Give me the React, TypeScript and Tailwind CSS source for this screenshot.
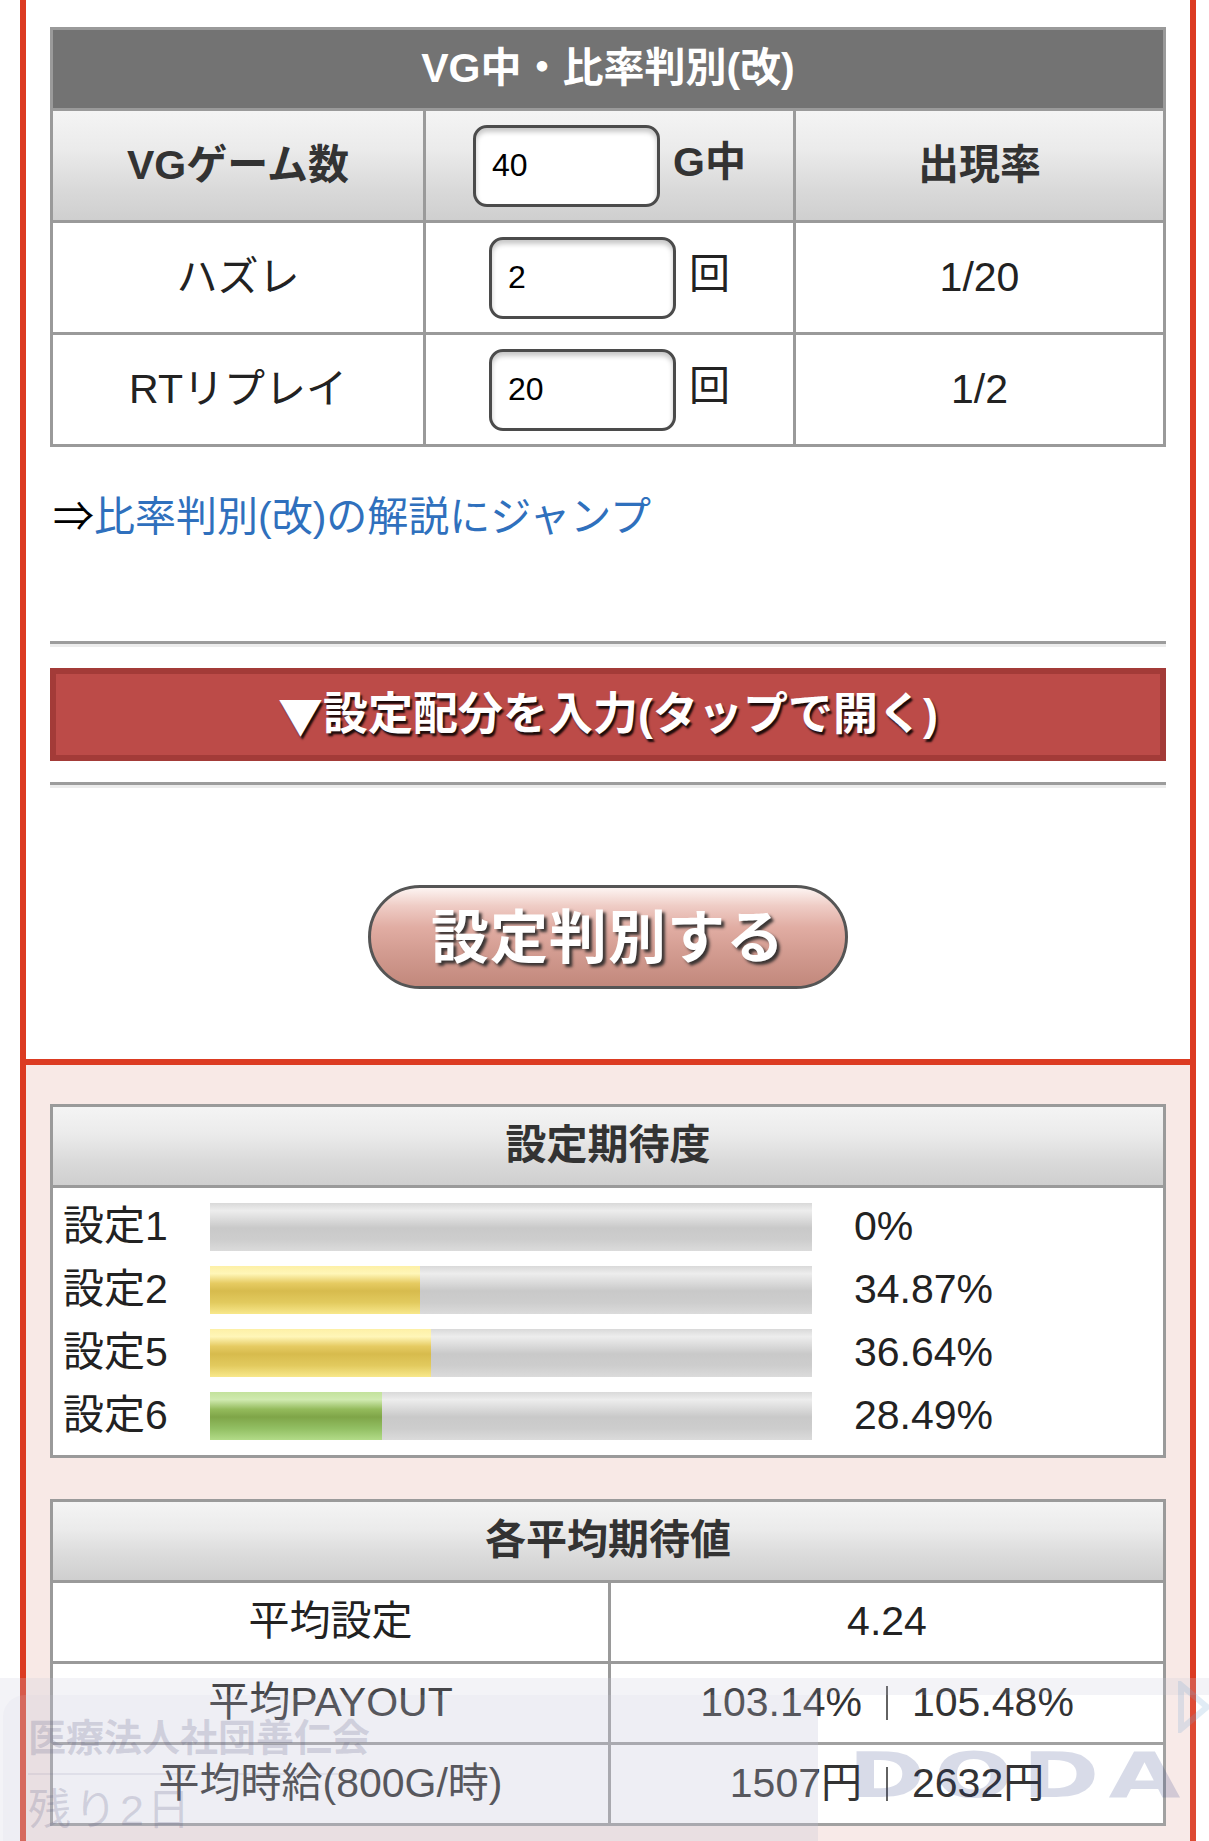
import React from 'react';

// 共通スタイル
const headGrad =
  'bg-[linear-gradient(to_bottom,#f4f4f4_0%,#ebebeb_35%,#dadada_70%,#cfcfcf_100%)]';

const barGray =
  'bg-[linear-gradient(to_bottom,#d9d9d9_0%,#ededed_16%,#d9d9d9_36%,#c9c9c9_52%,#cdcdcd_76%,#dbdbdb_100%)]';
const barYellow =
  'bg-[linear-gradient(to_bottom,#fdf0a6_0%,#fff6b8_16%,#e6cb62_36%,#d7bb4d_52%,#e2ca5e_76%,#f8e88b_100%)]';
const barGreen =
  'bg-[linear-gradient(to_bottom,#c3e29c_0%,#d0eab0_16%,#94bb5c_36%,#7fa548_52%,#92bf63_76%,#b2db88_100%)]';

interface Rate {
  label: string;
  pct: number;
  text: string;
  fill: string;
}

const rates: Rate[] = [
  { label: '設定1', pct: 0, text: '0%', fill: barYellow },
  { label: '設定2', pct: 34.87, text: '34.87%', fill: barYellow },
  { label: '設定5', pct: 36.64, text: '36.64%', fill: barYellow },
  { label: '設定6', pct: 28.49, text: '28.49%', fill: barGreen },
];

function NumInput({ value }: { value: string }) {
  return (
    <input
      type="text"
      defaultValue={value}
      className="w-[187px] h-[82px] rounded-[14px] border-[3px] border-[#4b4b4b] bg-white pl-[16px] text-[32px] text-black shadow-[inset_0_4px_5px_rgba(0,0,0,0.22)] outline-none"
    />
  );
}

function Sep() {
  return <span className="mx-[24px] inline-block w-[2px] h-[34px] bg-[#555] self-center" />;
}

export default function App() {
  return (
    <div className="relative h-[1841px] overflow-hidden bg-white text-[#222] font-['Liberation_Sans','Noto_Sans_CJK_JP',sans-serif]">
      <div className="ml-[20px] w-[1176px] border-x-[6px] border-[#dc3b22]">
        {/* 入力パネル */}
        <div className="px-[24px] pt-[27px] pb-[70px] border-b-[6px] border-[#dc3b22] bg-white">
          <div className="border-[3px] border-[#9a9a9a]">
            <div className="h-[78px] bg-[#737373] flex items-center justify-center text-white font-bold text-[41px]">
              VG中・比率判別(改)
            </div>
            <div className={`grid grid-cols-3 h-[112px] border-t-[3px] border-[#9a9a9a] ${headGrad}`}>
              <div className="flex items-center justify-center font-bold text-[41px] text-[#333]">VGゲーム数</div>
              <div className="flex items-center justify-center border-l-[3px] border-[#9a9a9a]">
                <div className="flex items-baseline">
                  <NumInput value="40" />
                  <span className="ml-[13px] font-bold text-[41px] text-[#333]">G中</span>
                </div>
              </div>
              <div className="flex items-center justify-center border-l-[3px] border-[#9a9a9a] font-bold text-[41px] text-[#333]">
                出現率
              </div>
            </div>
            {[
              { name: 'ハズレ', val: '2', rate: '1/20' },
              { name: 'RTリプレイ', val: '20', rate: '1/2' },
            ].map((r) => (
              <div key={r.name} className="grid grid-cols-3 h-[112px] border-t-[3px] border-[#9a9a9a] bg-white text-[41px]">
                <div className="flex items-center justify-center">{r.name}</div>
                <div className="flex items-center justify-center border-l-[3px] border-[#9a9a9a]">
                  <div className="flex items-baseline">
                    <NumInput value={r.val} />
                    <span className="ml-[13px]">回</span>
                  </div>
                </div>
                <div className="flex items-center justify-center border-l-[3px] border-[#9a9a9a]">{r.rate}</div>
              </div>
            ))}
          </div>

          <div className="mt-[40px] pl-[3px] text-[41px] leading-[61px]">
            <span className="text-black">⇒</span>
            <a className="text-[#2f70bd]">比率判別(改)の解説にジャンプ</a>
          </div>

          <div className="mt-[93px] h-[6px] border-t-[3px] border-[#9c9c9c] bg-[#ececec]" />

          <div className="mt-[21px] h-[93px] border-[6px] border-[#a33b38] bg-[#bc4b48] flex items-center justify-center text-white font-bold text-[45px] [text-shadow:2px_3px_2px_rgba(0,0,0,0.85)]">
            <span className="font-['Noto_Sans_CJK_JP',sans-serif]">▼</span>設定配分を入力(タップで開く)
          </div>

          <div className="mt-[21px] h-[6px] border-t-[3px] border-[#9c9c9c] bg-[#ececec]" />

          <div className="mt-[97px] flex justify-center">
            <button className="w-[480px] h-[104px] rounded-full border-[3px] border-[#555] bg-[linear-gradient(to_bottom,#fdf4f2_0%,#efcdc6_18%,#e1ada3_40%,#d39c91_65%,#c2887c_100%)] flex items-center justify-center text-white font-bold text-[58px] tracking-[1px] [text-shadow:3px_3px_3px_rgba(40,40,40,0.9)]">
              設定判別する
            </button>
          </div>
        </div>

        {/* 結果パネル */}
        <div className="px-[24px] pt-[39px] pb-[40px] bg-[#f8e9e6]">
          <div className="border-[3px] border-[#9a9a9a] bg-white">
            <div className={`h-[78px] flex items-center justify-center font-bold text-[41px] text-[#333] ${headGrad}`}>
              設定期待度
            </div>
            <div className="border-t-[3px] border-[#9a9a9a] py-[15px] flex flex-col gap-[15px]">
              {rates.map((r) => (
                <div key={r.label} className="flex items-center h-[48px] text-[41px]">
                  <div className="w-[157px] pl-[10px]">{r.label}</div>
                  <div className={`w-[602px] h-[48px] ${barGray}`}>
                    <div className={`h-full ${r.fill}`} style={{ width: `${r.pct}%` }} />
                  </div>
                  <div className="ml-[42px]">{r.text}</div>
                </div>
              ))}
            </div>
          </div>

          <div className="mt-[41px] border-[3px] border-[#9a9a9a] bg-white">
            <div className={`h-[78px] flex items-center justify-center font-bold text-[41px] text-[#333] ${headGrad}`}>
              各平均期待値
            </div>
            <div className="grid grid-cols-2 h-[81px] border-t-[3px] border-[#9a9a9a] text-[41px]">
              <div className="flex items-center justify-center">平均設定</div>
              <div className="flex items-center justify-center border-l-[3px] border-[#9a9a9a]">4.24</div>
            </div>
            <div className="grid grid-cols-2 h-[81px] border-t-[3px] border-[#9a9a9a] text-[41px]">
              <div className="flex items-center justify-center">平均PAYOUT</div>
              <div className="flex items-center justify-center border-l-[3px] border-[#9a9a9a]">
                <span>103.14%</span>
                <Sep />
                <span>105.48%</span>
              </div>
            </div>
            <div className="grid grid-cols-2 h-[81px] border-t-[3px] border-[#9a9a9a] text-[41px]">
              <div className="flex items-center justify-center">平均時給(800G/時)</div>
              <div className="flex items-center justify-center border-l-[3px] border-[#9a9a9a]">
                <span>1507円</span>
                <Sep />
                <span>2632円</span>
              </div>
            </div>
          </div>
        </div>
      </div>

      {/* 下部広告オーバーレイ */}
      <div className="absolute left-0 right-0 bottom-0 h-[163px] flex flex-col">
        <div className="h-[17px] bg-[rgba(200,202,218,0.22)]" />
        <div className="flex-1 flex">
          <div className="w-[818px] bg-[rgba(200,202,218,0.22)]" />
        </div>
      </div>
      <div className="absolute left-0 right-0 bottom-0 h-[146px] flex">
        <div className="ml-[3px] w-[815px] rounded-tl-[22px] bg-[rgba(205,205,222,0.13)] pl-[25px] pt-[22px]">
          <div className="text-[38px] leading-[42px] font-bold text-[rgba(100,100,135,0.22)]">医療法人社団善仁会</div>
          <div className="mt-[14px] w-[345px] h-[2px] bg-[rgba(100,100,135,0.1)]" />
          <div className="mt-[10px] text-[43px] leading-[50px] tracking-[3px] text-[rgba(100,100,135,0.22)]">残り2日</div>
        </div>
        <div className="relative flex-1 bg-[rgba(255,255,255,0.08)]">
          <div className="absolute left-[30px] top-[56px] origin-left scale-x-[1.5] text-[62px] leading-[50px] font-bold tracking-[6px] text-[rgba(40,55,130,0.18)] font-['DejaVu_Sans',sans-serif]">
            DODA
          </div>
          <svg className="absolute right-0 top-[-14px]" width="34" height="52" viewBox="0 0 34 52">
            <polygon points="6,4 32,26 6,48" fill="none" stroke="rgba(120,170,210,0.22)" strokeWidth="6" />
          </svg>
        </div>
      </div>
    </div>
  );
}
